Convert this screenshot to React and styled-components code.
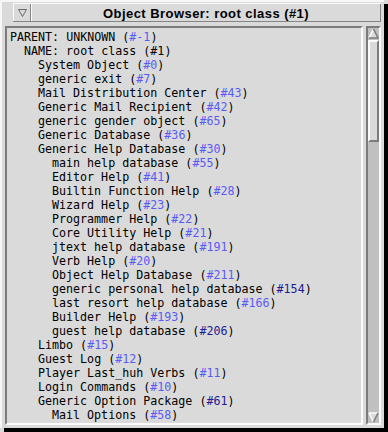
import React from 'react';
import styled, { createGlobalStyle } from 'styled-components';

const Global = createGlobalStyle`
  html, body { margin: 0; padding: 0; background: #dadada; }
  body { width: 388px; height: 432px; overflow: hidden; }
`;

const Window = styled.div`
  box-sizing: border-box;
  width: 384px;
  height: 428px;
  background: #dadada;
  border-top: 2px solid #f7f7f7;
  border-left: 2px solid #f7f7f7;
  box-shadow: 4px 4px 0 #000;
  display: flex;
  flex-direction: column;
`;

const TitleBar = styled.div`
  box-sizing: border-box;
  display: flex;
  height: 19px;
  margin: 1px 3px 0 11px;
  border-top: 1px solid #fbfbfb;
  border-bottom: 1px solid #858585;
`;

const MenuButton = styled.div`
  box-sizing: border-box;
  width: 18px;
  display: flex;
  align-items: center;
  justify-content: center;
  border-left: 1px solid #fbfbfb;
  border-right: 1px solid #858585;
`;

const Title = styled.div`
  flex: 1;
  box-sizing: border-box;
  border-left: 1px solid #fbfbfb;
  border-right: 1px solid #858585;
  display: flex;
  align-items: center;
  justify-content: center;
  font-family: "Liberation Sans", Arial, sans-serif;
  font-weight: bold;
  font-size: 13px;
  letter-spacing: 0.45px;
  color: #000;
  padding-top: 1px;
`;

const Body = styled.div`
  flex: 1;
  min-height: 0;
  display: flex;
  gap: 3px;
  margin: 4px 3px 3px 3px;
`;

const ListBox = styled.div`
  flex: 1;
  min-width: 0;
  box-sizing: border-box;
  overflow: hidden;
  border: 2px solid;
  border-color: #7c7c7c #fbfbfb #fbfbfb #7c7c7c;
  padding: 2px 0 0 3px;
  font-family: "DejaVu Sans Mono", "Liberation Mono", monospace;
  font-size: 11.67px;
  line-height: 14px;
  color: #000;
`;

const Line = styled.div`
  white-space: pre;
  padding-left: ${p => p.$level * 14}px;
`;

const Ref = styled.span`
  color: ${p => (p.$tone === 'dark' ? '#1c1c94' : p.$tone === 'plain' ? '#000' : '#5a5af5')};
`;

const ScrollBar = styled.div`
  box-sizing: border-box;
  width: 15px;
  display: flex;
  flex-direction: column;
  border: 2px solid;
  border-color: #7c7c7c #fbfbfb #fbfbfb #7c7c7c;
  background: #c0c0c0;
`;

const ArrowBox = styled.div`
  height: 11px;
  display: flex;
`;

const Trough = styled.div`
  flex: 1;
  display: flex;
  flex-direction: column;
  padding-top: 1px;
`;

const Thumb = styled.div`
  box-sizing: border-box;
  height: 102px;
  background: #dadada;
  border: 2px solid;
  border-color: #fbfbfb #7c7c7c #7c7c7c #fbfbfb;
`;

const Arrow = ({ down }) => (
  <svg width="11" height="11" viewBox="0 0 11 11">
    {down ? (
      <>
        <polygon points="1,1 10,1 5.5,10" fill="#dadada" />
        <polyline points="1,1 10,1" stroke="#fbfbfb" strokeWidth="1.5" fill="none" />
        <polyline points="1,1 5.5,10" stroke="#fbfbfb" strokeWidth="1.5" fill="none" />
        <polyline points="10,1 5.5,10" stroke="#7c7c7c" strokeWidth="1.5" fill="none" />
      </>
    ) : (
      <>
        <polygon points="5.5,1 10,10 1,10" fill="#dadada" />
        <polyline points="5.5,1 1,10" stroke="#fbfbfb" strokeWidth="1.5" fill="none" />
        <polyline points="5.5,1 10,10 1,10" stroke="#7c7c7c" strokeWidth="1.5" fill="none" />
      </>
    )}
  </svg>
);

const MenuGlyph = () => (
  <svg width="9" height="8" viewBox="0 0 9 8">
    <polygon points="0.5,0.5 8.5,0.5 4.5,7.5" fill="none" stroke="#6a6a6a" strokeWidth="1" />
  </svg>
);

const items = [
  [0, 'PARENT: UNKNOWN', '#-1'],
  [1, 'NAME: root class', '#1', 'plain'],
  [2, 'System Object', '#0'],
  [2, 'generic exit', '#7'],
  [2, 'Mail Distribution Center', '#43'],
  [2, 'Generic Mail Recipient', '#42'],
  [2, 'generic gender object', '#65'],
  [2, 'Generic Database', '#36'],
  [2, 'Generic Help Database', '#30'],
  [3, 'main help database', '#55'],
  [3, 'Editor Help', '#41'],
  [3, 'Builtin Function Help', '#28'],
  [3, 'Wizard Help', '#23'],
  [3, 'Programmer Help', '#22'],
  [3, 'Core Utility Help', '#21'],
  [3, 'jtext help database', '#191'],
  [3, 'Verb Help', '#20'],
  [3, 'Object Help Database', '#211'],
  [3, 'generic personal help database', '#154', 'dark'],
  [3, 'last resort help database', '#166'],
  [3, 'Builder Help', '#193'],
  [3, 'guest help database', '#206', 'dark'],
  [2, 'Limbo', '#15'],
  [2, 'Guest Log', '#12'],
  [2, 'Player Last_huh Verbs', '#11'],
  [2, 'Login Commands', '#10'],
  [2, 'Generic Option Package', '#61', 'dark'],
  [3, 'Mail Options', '#58'],
];

export default function App() {
  return (
    <>
      <Global />
      <Window>
        <TitleBar>
          <MenuButton><MenuGlyph /></MenuButton>
          <Title>Object Browser: root class (#1)</Title>
        </TitleBar>
        <Body>
          <ListBox>
            {items.map(([lvl, name, ref, tone], i) => (
              <Line key={i} $level={lvl}>
                {name} (<Ref $tone={tone}>{ref}</Ref>)
              </Line>
            ))}
          </ListBox>
          <ScrollBar>
            <ArrowBox><Arrow /></ArrowBox>
            <Trough><Thumb /></Trough>
            <ArrowBox><Arrow down /></ArrowBox>
          </ScrollBar>
        </Body>
      </Window>
    </>
  );
}
